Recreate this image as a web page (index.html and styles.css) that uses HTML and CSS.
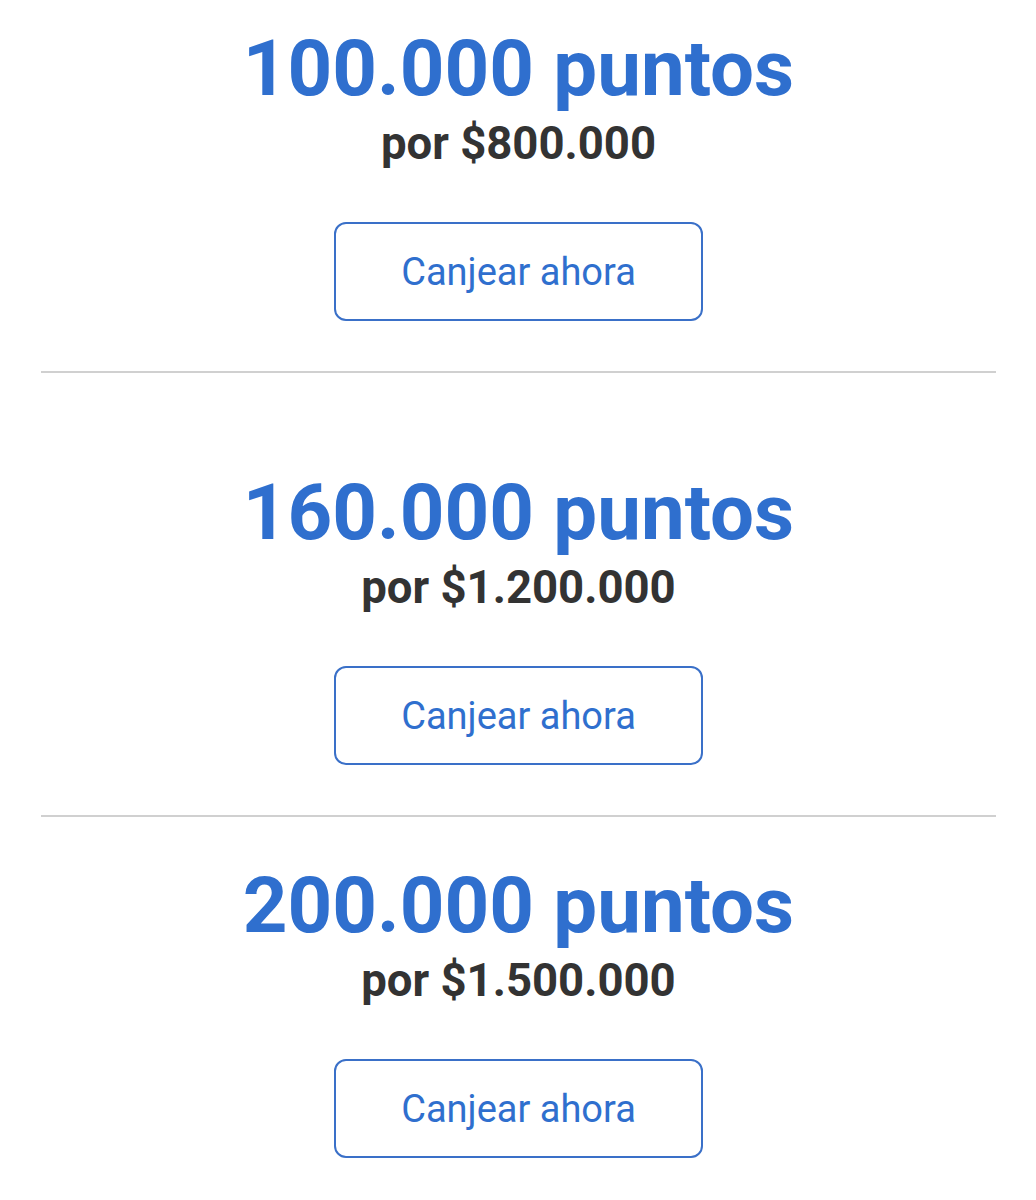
FILE: index.html
```html
<!DOCTYPE html>
<html lang="es">
<head>
  <meta charset="UTF-8" />
  <meta name="viewport" content="width=device-width, initial-scale=1.0">
  <title>Canjear puntos</title>
  <link rel="stylesheet" href="styles.css">
</head>
<body>

  <div class="offers">
    <div class="offer offer-first">
      <h2 class="offer-points">100.000 puntos</h2>
      <p class="offer-price">por $800.000</p>
      <button class="offer-btn">Canjear ahora</button>
    </div>

    <div class="offer offer-spaced">
      <h2 class="offer-points">160.000 puntos</h2>
      <p class="offer-price">por $1.200.000</p>
      <button class="offer-btn">Canjear ahora</button>
    </div>

    <div class="offer">
      <h2 class="offer-points">200.000 puntos</h2>
      <p class="offer-price">por $1.500.000</p>
      <button class="offer-btn">Canjear ahora</button>
    </div>
  </div>

</body>
</html>
```

FILE: styles.css
```css
body {
  margin: 0;
  font-family: Roboto, 'Noto Sans', sans-serif;
  background: #fff;
}

.offers {
  margin: 0 40px 0 41px;
}

.offer {
  display: flex;
  flex-direction: column;
  align-items: center;
  padding: 50px 0 50px;
  border-bottom: 2px solid #d0d0d0;
}

.offer:last-child {
  border-bottom: none;
}

.offer-first {
  padding-top: 30px;
}

.offer-spaced {
  padding-top: 101px;
}

.offer-points {
  margin: 0;
  font-size: 78px;
  line-height: 78px;
  font-weight: 700;
  color: #2f6fce;
}

.offer-price {
  margin: 10px 0 0;
  font-size: 45.5px;
  line-height: 52px;
  font-weight: 700;
  color: #333;
}

.offer-btn {
  margin-top: 52px;
  width: 369px;
  height: 99px;
  background: #fff;
  border: 2px solid #3a70c8;
  border-radius: 12px;
  color: #2f6fce;
  font-family: inherit;
  font-size: 38px;
  cursor: pointer;
}
```
